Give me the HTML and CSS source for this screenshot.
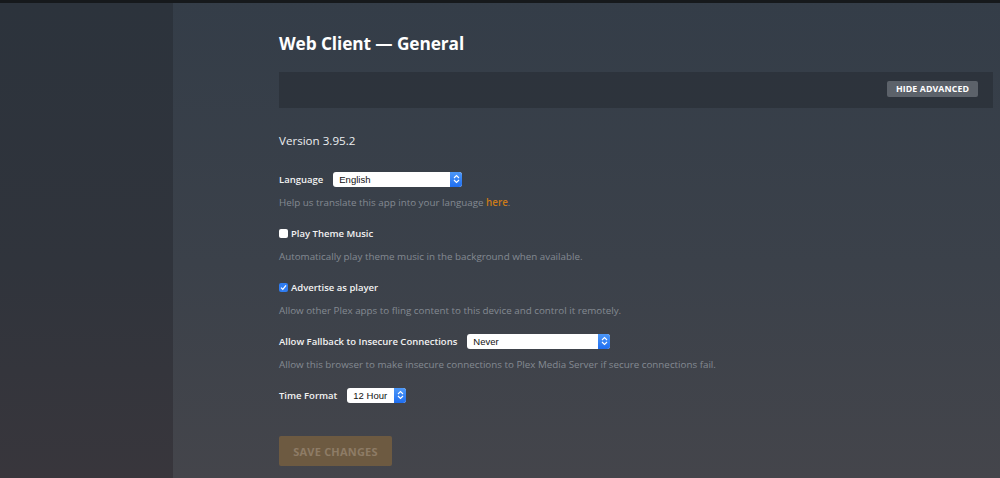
FILE: index.html
```html
<!DOCTYPE html>
<html lang="en">
<head>
  <meta charset="UTF-8" />
  <meta name="viewport" content="width=device-width, initial-scale=1.0"/>
  <title>Web Client — General</title>
  <link rel="stylesheet" href="styles.css">
</head>
<body>
  <div class="topbar"></div>
  <div class="layout">
    <aside class="sidebar"></aside>
    <main class="main">
      <h1>Web Client — General</h1>
      <div class="advanced-bar">
        <button class="btn-advanced">HIDE ADVANCED</button>
      </div>

      <p class="version">Version 3.95.2</p>

      <div class="group">
        <div class="row">
          <label class="label">Language</label>
          <div class="select" style="width: 129px;">
            <span class="select-value">English</span>
            <span class="stepper">
              <svg width="7" height="10" viewBox="0 0 7 10"><path d="M1 4 L3.5 1.5 L6 4 M1 6 L3.5 8.5 L6 6" fill="none" stroke="#fff" stroke-width="1.1"/></svg>
            </span>
          </div>
        </div>
        <p class="help">Help us translate this app into your language <a href="#">here</a>.</p>
      </div>

      <div class="group">
        <div class="row">
          <span class="check"></span>
          <label class="label">Play Theme Music</label>
        </div>
        <p class="help">Automatically play theme music in the background when available.</p>
      </div>

      <div class="group">
        <div class="row">
          <span class="check checked">
            <svg width="9" height="9" viewBox="0 0 9 9"><path d="M2 4.6 L3.8 6.4 L7 2.4" fill="none" stroke="#fff" stroke-width="1.3"/></svg>
          </span>
          <label class="label">Advertise as player</label>
        </div>
        <p class="help">Allow other Plex apps to fling content to this device and control it remotely.</p>
      </div>

      <div class="group">
        <div class="row">
          <label class="label">Allow Fallback to Insecure Connections</label>
          <div class="select" style="width: 143px;">
            <span class="select-value">Never</span>
            <span class="stepper">
              <svg width="7" height="10" viewBox="0 0 7 10"><path d="M1 4 L3.5 1.5 L6 4 M1 6 L3.5 8.5 L6 6" fill="none" stroke="#fff" stroke-width="1.1"/></svg>
            </span>
          </div>
        </div>
        <p class="help">Allow this browser to make insecure connections to Plex Media Server if secure connections fail.</p>
      </div>

      <div class="group">
        <div class="row">
          <label class="label">Time Format</label>
          <div class="select" style="width: 59px;">
            <span class="select-value">12 Hour</span>
            <span class="stepper">
              <svg width="7" height="10" viewBox="0 0 7 10"><path d="M1 4 L3.5 1.5 L6 4 M1 6 L3.5 8.5 L6 6" fill="none" stroke="#fff" stroke-width="1.1"/></svg>
            </span>
          </div>
        </div>
      </div>

      <button class="btn-save">SAVE CHANGES</button>
    </main>
  </div>
</body>
</html>
```

FILE: styles.css
```css
body {
  margin: 0;
  height: 478px;
  overflow: hidden;
  font-family: 'Open Sans', 'Noto Sans', sans-serif;
  background: linear-gradient(180deg, #343d48 0%, #3b414a 55%, #44454b 100%);
  color: #fff;
}
.topbar {
  height: 3px;
  background-color: #16191c;
}
.layout {
  display: flex;
  height: 475px;
}
.sidebar {
  width: 173px;
  flex-shrink: 0;
  background: linear-gradient(180deg, #2c333c 0%, #30343c 55%, #38363c 100%);
}
.main {
  flex: 1;
  padding: 29px 7px 0 106px;
}
h1 {
  margin: 0;
  font-size: 17.3px;
  line-height: 24px;
  font-weight: 700;
  letter-spacing: -0.1px;
}
.advanced-bar {
  margin-top: 16px;
  height: 36px;
  background-color: rgba(20, 24, 30, 0.28);
  display: flex;
  align-items: center;
  justify-content: flex-end;
  padding-right: 15px;
}
.btn-advanced {
  height: 16px;
  width: 91px;
  margin-top: -2px;
  padding: 0;
  border: none;
  border-radius: 2px;
  background-color: #5c626a;
  color: #fff;
  font-family: inherit;
  font-size: 8.8px;
  font-weight: 700;
  letter-spacing: 0.1px;
}
.version {
  margin: 25px 0 22px;
  font-size: 11.6px;
  line-height: 16px;
  color: #eceef0;
}
.group {
  margin-bottom: 14px;
}
.row {
  display: flex;
  align-items: center;
  height: 16px;
}
.label {
  font-size: 9.5px;
  font-weight: 600;
  color: #f2f2f2;
  margin-right: 10px;
}
.help {
  margin: 8px 0 0;
  font-size: 9.8px;
  line-height: 16px;
  color: #848a92;
}
.help a {
  color: #cc7b19;
  font-weight: 600;
  text-decoration: none;
}
.select {
  display: flex;
  height: 15px;
  background-color: #fff;
  border-radius: 3px;
  overflow: hidden;
}
.select-value {
  flex: 1;
  padding-left: 6px;
  font-family: 'Liberation Sans', Arial, sans-serif;
  font-size: 9.5px;
  line-height: 15px;
  color: #111;
}
.stepper {
  width: 12px;
  display: flex;
  align-items: center;
  justify-content: center;
  background: linear-gradient(180deg, #4d98f8 0%, #1f6ef0 100%);
}
.check {
  width: 9px;
  height: 9px;
  border-radius: 2px;
  background-color: #fff;
  margin-right: 3px;
  display: flex;
  align-items: center;
  justify-content: center;
}
.check.checked {
  background-color: #2f7cf0;
}
.btn-save {
  margin-top: 19px;
  width: 113px;
  height: 30px;
  border: none;
  border-radius: 2px;
  background-color: #6d5a41;
  color: #8e7c66;
  font-family: inherit;
  font-size: 11px;
  font-weight: 700;
  letter-spacing: 0.2px;
}
```
